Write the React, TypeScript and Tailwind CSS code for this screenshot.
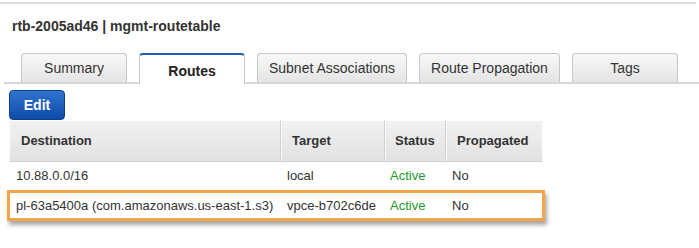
const tabs = [
  { label: "Summary", w: "w-[106px]" },
  { label: "Routes", w: "w-[106px]", active: true },
  { label: "Subnet Associations", w: "w-[150px]" },
  { label: "Route Propagation", w: "w-[141px]" },
  { label: "Tags", w: "w-[106px]" },
];

const routes = [
  { dest: "10.88.0.0/16", target: "local", status: "Active", prop: "No" },
  {
    dest: "pl-63a5400a (com.amazonaws.us-east-1.s3)",
    target: "vpce-b702c6de",
    status: "Active",
    prop: "No",
    highlight: true,
  },
];

export default function App() {
  return (
    <div
      className="w-[699px] h-[248px] bg-white overflow-hidden text-[#333]"
      style={{ fontFamily: '"Liberation Sans", Arial, sans-serif' }}
    >
      <div className="mt-[2px] h-[2px] bg-[#dcdcdc] mr-[3px]" />

      <h1 className="pl-[12px] pt-[13px] text-[14px] leading-[18px] font-bold text-[#333]">
        rtb-2005ad46 | mgmt-routetable
      </h1>

      {/* tabs */}
      <div className="mt-[18px] ml-[4px] border-b-2 border-[#d6d6d6] flex gap-[12px] pl-[17px] h-[31px]">
        {tabs.map((t) =>
          t.active ? (
            <div
              key={t.label}
              className={`${t.w} h-[31px] -mb-[2px] bg-white border border-[#c8c8c8] border-b-0 border-t-2 border-t-[#1f5db0] rounded-t-[4px] flex items-center justify-center pt-[4px] text-[14px] font-bold text-[#222]`}
            >
              {t.label}
            </div>
          ) : (
            <div
              key={t.label}
              className={`${t.w} h-[29px] bg-gradient-to-b from-[#f8f8f8] to-[#e4e4e4] border border-[#c6c6c6] border-b-0 rounded-t-[4px] flex items-center justify-center text-[14px] text-[#333]`}
            >
              {t.label}
            </div>
          )
        )}
      </div>

      <button className="mt-[6px] ml-[9px] w-[56px] h-[30px] rounded-[4px] bg-gradient-to-b from-[#2f74d0] to-[#0f4ba8] border border-[#0c3f91] text-white text-[14px] font-bold flex items-center justify-center">
        Edit
      </button>

      {/* table */}
      <div className="ml-[10px] w-[532px] mt-[1px] text-[13px] whitespace-nowrap">
        <div className="flex h-[41px] bg-gradient-to-b from-[#f1f1f1] to-[#e2e2e2] border-b border-[#cfcfcf] font-bold text-[#333]">
          <div className="w-[271px] flex items-center pl-[11px] border-r border-[#d0d0d0] shadow-[1px_0_0_#fafafa]">
            Destination
          </div>
          <div className="w-[104px] flex items-center pl-[11px] border-r border-[#d0d0d0] shadow-[1px_0_0_#fafafa]">
            Target
          </div>
          <div className="w-[61px] flex items-center pl-[10px] border-r border-[#d0d0d0] shadow-[1px_0_0_#fafafa]">
            Status
          </div>
          <div className="flex-1 flex items-center pl-[11px]">Propagated</div>
        </div>

        {routes.map((r) => (
          <div
            key={r.dest}
            className={
              r.highlight
                ? "flex h-[31px] -mx-[3px] items-center border-[3px] border-[#f5a448] shadow-[2px_4px_4px_rgba(0,0,0,0.35)] bg-white"
                : "flex h-[28px] items-center"
            }
          >
            <div className="w-[271px] pl-[6px]">{r.dest}</div>
            <div className="w-[104px] pl-[6px]">{r.target}</div>
            <div className="w-[61px] pl-[5px] text-[#1a9a2c]">{r.status}</div>
            <div className="flex-1 pl-[6px]">{r.prop}</div>
          </div>
        ))}
      </div>
    </div>
  );
}
